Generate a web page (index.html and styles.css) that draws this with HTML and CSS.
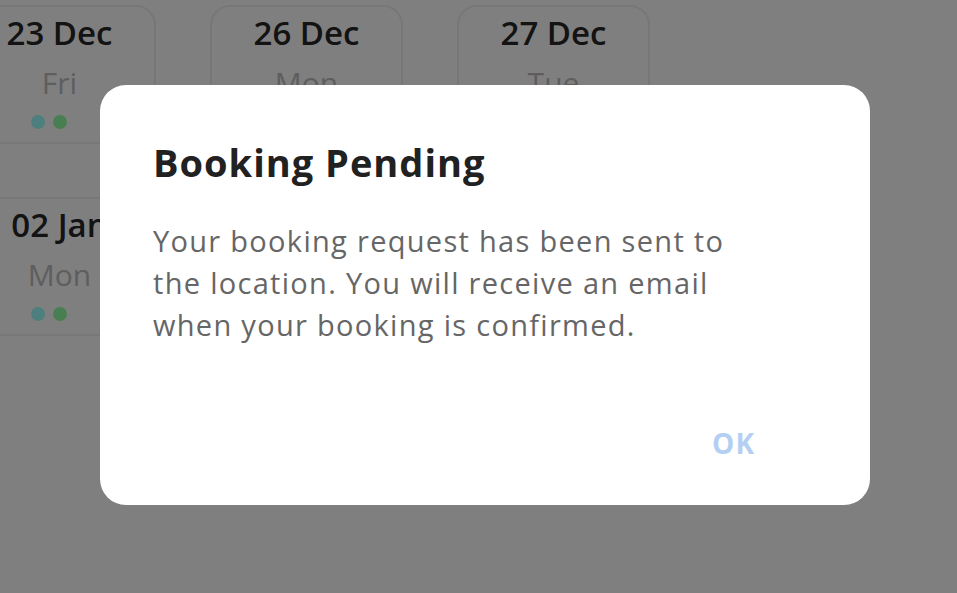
FILE: index.html
```html
<!DOCTYPE html>
<html lang="en">
<head>
<meta charset="utf-8">
<title>Booking Pending</title>
<link rel="stylesheet" href="styles.css">
</head>
<body>
<main class="dates">
  <div class="day-card"><div class="date">23 Dec</div><div class="weekday">Fri</div><div class="dots"><span class="dot teal"></span><span class="dot green"></span><span class="dot empty"></span></div></div>
  <div class="day-card"><div class="date">26 Dec</div><div class="weekday">Mon</div><div class="dots"><span class="dot teal"></span><span class="dot green"></span><span class="dot empty"></span></div></div>
  <div class="day-card"><div class="date">27 Dec</div><div class="weekday">Tue</div><div class="dots"><span class="dot teal"></span><span class="dot green"></span><span class="dot empty"></span></div></div>
  <div class="day-card"><div class="date">02 Jan</div><div class="weekday">Mon</div><div class="dots"><span class="dot teal"></span><span class="dot green"></span><span class="dot empty"></span></div></div>
</main>
<div class="overlay">
  <div class="dialog" role="dialog" aria-labelledby="dlg-title">
    <h2 class="dialog-title" id="dlg-title">Booking Pending</h2>
    <p class="dialog-body">Your booking request has been sent to the location. You will receive an email when your booking is confirmed.</p>
    <div class="dialog-actions"><button class="ok-btn" type="button">OK</button></div>
  </div>
</div>
</body>
</html>
```
FILE: styles.css
```css
html, body {
  margin: 0;
  padding: 0;
  height: 100%;
  background: #ffffff;
  font-family: "Open Sans", Roboto, sans-serif;
  overflow: hidden;
}

.dates {
  display: grid;
  grid-template-columns: repeat(3, 193px);
  column-gap: 54px;
  row-gap: 53px;
  margin-left: -37px;
  padding-top: 5px;
}

.day-card {
  height: 139px;
  box-sizing: border-box;
  border: 2px solid #eeeeee;
  border-radius: 20px;
  display: flex;
  flex-direction: column;
  align-items: center;
  padding-top: 6px;
}

.date {
  font-size: 33px;
  font-weight: 600;
  color: #262626;
  line-height: 40px;
  white-space: nowrap;
}

.weekday {
  font-size: 30px;
  color: #bcbcbc;
  line-height: 36px;
  margin-top: 12px;
}

.dots {
  display: flex;
  gap: 8px;
  margin-top: 14px;
}

.dot {
  width: 14px;
  height: 14px;
  border-radius: 50%;
}

.teal { background: #9cfeff; }
.green { background: #90fea4; }
.empty { background: transparent; }

.overlay {
  position: fixed;
  inset: 0;
  background: rgba(0, 0, 0, 0.5);
  display: flex;
  align-items: center;
  justify-content: center;
  padding-left: 13px;
  padding-bottom: 4px;
}

.dialog {
  width: 770px;
  height: 420px;
  box-sizing: border-box;
  background: #ffffff;
  border-radius: 26px;
  padding: 55px 53px 0 53px;
  display: flex;
  flex-direction: column;
}

.dialog-title {
  margin: 0;
  font-size: 38px;
  font-weight: 700;
  letter-spacing: 1px;
  color: #212121;
  line-height: 44px;
  white-space: nowrap;
}

.dialog-body {
  margin: 36px 0 0 0;
  font-size: 29px;
  letter-spacing: 1.3px;
  line-height: 42px;
  color: #666666;
  max-width: 605px;
}

.dialog-actions {
  display: flex;
  justify-content: flex-end;
  margin-top: auto;
  margin-bottom: 45px;
  padding-right: 62px;
}

.ok-btn {
  border: 0;
  background: none;
  padding: 0;
  font-family: inherit;
  font-size: 28px;
  font-weight: 700;
  letter-spacing: 1px;
  color: #b5cff2;
  line-height: 34px;
}
```
